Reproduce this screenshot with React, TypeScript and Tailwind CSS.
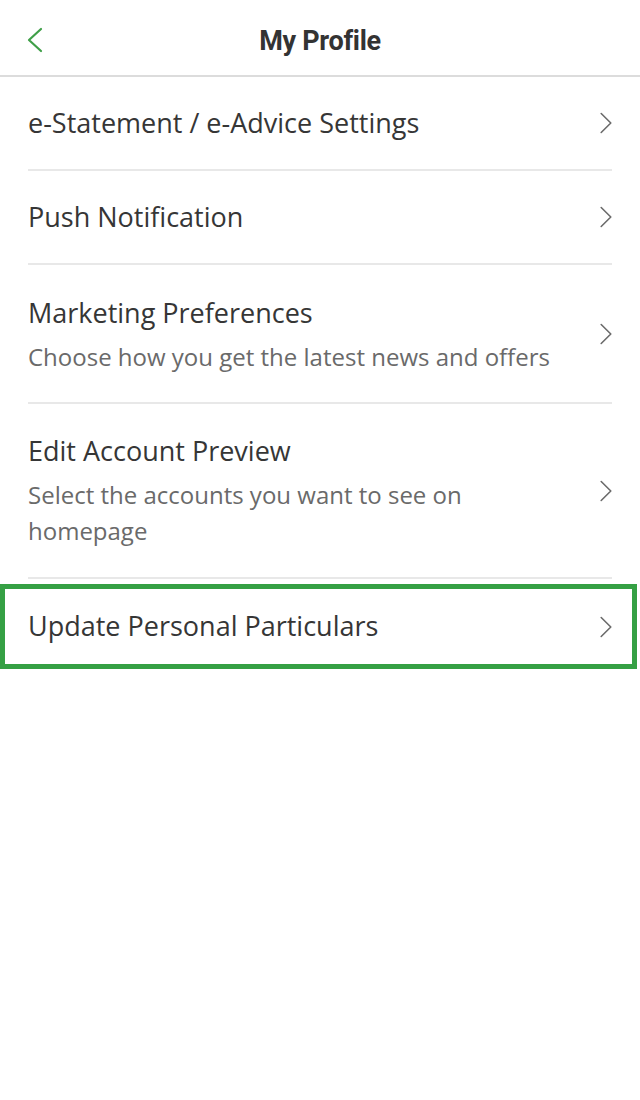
import React from 'react';

type Item = {
  title: string;
  subtitle?: string;
  pad?: string;
};

const items: Item[] = [
  { title: 'e-Statement / e-Advice Settings' },
  { title: 'Push Notification' },
  { title: 'Marketing Preferences', subtitle: 'Choose how you get the latest news and offers', pad: 'pt-[30px] pb-[27px]' },
  { title: 'Edit Account Preview', subtitle: 'Select the accounts you want to see on homepage', pad: 'pt-[29px] pb-[28px]' },
];

function Chevron() {
  return (
    <svg width="12" height="22" viewBox="0 0 12 22" fill="none" className="shrink-0">
      <path d="M1.2 1.5 L10.8 11 L1.2 20.5" stroke="#6b6b6b" strokeWidth="1.6" strokeLinecap="round" strokeLinejoin="round" />
    </svg>
  );
}

export default function App() {
  return (
    <div className="w-[640px] h-[1100px] bg-white text-[#363636]" style={{ fontFamily: '"Open Sans", "Noto Sans", sans-serif' }}>
      {/* Header */}
      <div className="relative flex h-[77px] items-center justify-center border-b-2 border-[#dcdcdc]">
        <button className="absolute left-[26px] top-[27px]">
          <svg width="18" height="26" viewBox="0 0 18 26" fill="none">
            <path d="M15 2 L3 13 L15 24" stroke="#3f9f48" strokeWidth="2.2" strokeLinecap="round" strokeLinejoin="round" />
          </svg>
        </button>
        <h1 className="mb-[-8px] text-[27px] font-bold tracking-[-0.3px] text-[#333333]" style={{ fontFamily: '"Roboto", "Noto Sans", sans-serif' }}>
          My Profile
        </h1>
      </div>

      {/* List */}
      <div className="px-[28px]">
        {items.map((item, i) => (
          <div key={i} className="flex items-center justify-between border-b-2 border-[#e8e8e8]">
            {item.subtitle ? (
              <div className={`${item.pad} max-w-[530px] flex-1`}>
                <div className="text-[27px] leading-[36px]">{item.title}</div>
                <div className="mt-[8px] text-[24px] leading-[36px] text-[#6a6a6a]">{item.subtitle}</div>
              </div>
            ) : (
              <div className="flex h-[92px] items-center text-[27px]">{item.title}</div>
            )}
            <Chevron />
          </div>
        ))}
      </div>

      {/* Highlighted row */}
      <div className="mt-[5px] mr-[3px] flex h-[85px] items-center justify-between border-[5px] border-[#35a044] pl-[23px] pr-[20px]">
        <span className="text-[27px]">Update Personal Particulars</span>
        <Chevron />
      </div>
    </div>
  );
}
